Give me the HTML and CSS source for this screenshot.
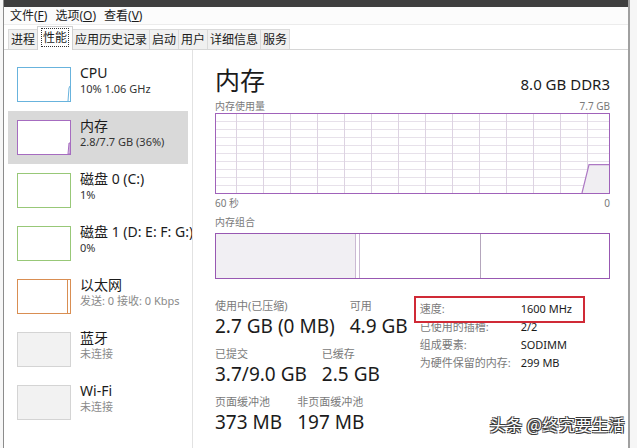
FILE: index.html
```html
<!DOCTYPE html>
<html lang="zh-CN">
<head>
    <meta charset="UTF-8">
    <title>任务管理器 - 性能</title>
    <link rel="stylesheet" href="styles.css">
</head>
<body>
<div class="desk">
    <!-- 뒤에 깔린 다른 창의 가장자리 -->
    <div class="behind"></div>

    <div class="window">
        <div class="titlebar"></div>

        <div class="menubar">
            <span class="menu">文件(<u>F</u>)</span>
            <span class="menu">选项(<u>O</u>)</span>
            <span class="menu">查看(<u>V</u>)</span>
        </div>

        <div class="tabs">
            <span class="tab">进程</span>
            <span class="tab active"><span class="focus">性能</span></span>
            <span class="tab">应用历史记录</span>
            <span class="tab">启动</span>
            <span class="tab">用户</span>
            <span class="tab">详细信息</span>
            <span class="tab">服务</span>
        </div>

        <div class="main">
            <!-- 왼쪽 장치 목록 -->
            <div class="sidebar">
                <div class="item">
                    <div class="thumb cpu">
                        <svg viewBox="0 0 52 33" preserveAspectRatio="none"><polyline points="50,33 51,20 52,18" /></svg>
                    </div>
                    <div class="item-text">
                        <div class="item-name">CPU</div>
                        <div class="item-sub">10% 1.06 GHz</div>
                    </div>
                </div>
                <div class="item selected">
                    <div class="thumb mem">
                        <svg viewBox="0 0 52 33" preserveAspectRatio="none"><polygon points="50,33 51,22 52,22 52,33" /></svg>
                    </div>
                    <div class="item-text">
                        <div class="item-name">内存</div>
                        <div class="item-sub">2.8/7.7 GB (36%)</div>
                    </div>
                </div>
                <div class="item">
                    <div class="thumb disk"></div>
                    <div class="item-text">
                        <div class="item-name">磁盘 0 (C:)</div>
                        <div class="item-sub">1%</div>
                    </div>
                </div>
                <div class="item">
                    <div class="thumb disk"></div>
                    <div class="item-text">
                        <div class="item-name">磁盘 1 (D: E: F: G:)</div>
                        <div class="item-sub">0%</div>
                    </div>
                </div>
                <div class="item">
                    <div class="thumb net"></div>
                    <div class="item-text">
                        <div class="item-name">以太网</div>
                        <div class="item-sub muted">发送: 0 接收: 0 Kbps</div>
                    </div>
                </div>
                <div class="item">
                    <div class="thumb off"></div>
                    <div class="item-text">
                        <div class="item-name">蓝牙</div>
                        <div class="item-sub muted">未连接</div>
                    </div>
                </div>
                <div class="item">
                    <div class="thumb off"></div>
                    <div class="item-text">
                        <div class="item-name">Wi-Fi</div>
                        <div class="item-sub muted">未连接</div>
                    </div>
                </div>
            </div>

            <!-- 오른쪽 메모리 상세 -->
            <div class="detail">
                <div class="head">
                    <span class="title">内存</span>
                    <span class="spec-total">8.0 GB DDR3</span>
                </div>

                <div class="caption"><span>内存使用量</span><span>7.7 GB</span></div>
                <div class="chart">
                    <svg viewBox="0 0 393 78" preserveAspectRatio="none">
                        <polygon class="fill" points="366,78 373,50 393,50 393,78" />
                        <polyline class="line" points="366,78 373,50 393,50" />
                    </svg>
                </div>
                <div class="caption after"><span>60 秒</span><span>0</span></div>

                <div class="caption combo-label"><span>内存组合</span></div>
                <div class="combo">
                    <div class="seg used"></div>
                    <div class="seg modified"></div>
                    <div class="seg standby"></div>
                    <div class="seg free"></div>
                </div>

                <div class="stats">
                    <div class="stat-block">
                        <div class="stat-row">
                            <div class="stat"><div class="stat-label">使用中(已压缩)</div><div class="stat-value">2.7 GB (0 MB)</div></div>
                            <div class="stat"><div class="stat-label">可用</div><div class="stat-value">4.9 GB</div></div>
                        </div>
                        <div class="stat-row">
                            <div class="stat"><div class="stat-label">已提交</div><div class="stat-value">3.7/9.0 GB</div></div>
                            <div class="stat"><div class="stat-label">已缓存</div><div class="stat-value">2.5 GB</div></div>
                        </div>
                        <div class="stat-row">
                            <div class="stat"><div class="stat-label">页面缓冲池</div><div class="stat-value">373 MB</div></div>
                            <div class="stat"><div class="stat-label">非页面缓冲池</div><div class="stat-value">197 MB</div></div>
                        </div>
                    </div>

                    <div class="specs">
                        <div class="spec-row marked"><span class="spec-key">速度:</span><span>1600 MHz</span></div>
                        <div class="spec-row"><span class="spec-key">已使用的插槽:</span><span>2/2</span></div>
                        <div class="spec-row"><span class="spec-key">组成要素:</span><span>SODIMM</span></div>
                        <div class="spec-row"><span class="spec-key">为硬件保留的内存:</span><span>299 MB</span></div>
                    </div>
                </div>
            </div>
        </div>

        <div class="watermark">头条 @终究要生活</div>
    </div>

    <div class="outside"></div>
</div>
</body>
</html>
```

FILE: styles.css
```css
body {
    margin: 0;
    width: 637px;
    height: 448px;
    overflow: hidden;
    font-family: "Noto Sans", "Noto Sans CJK SC", sans-serif;
    color: #1b1b1b;
    background: #f4f4f4;
}
.desk {
    display: flex;
    height: 448px;
}

/* 뒤 창 가장자리 */
.behind {
    width: 3px;
    border-right: 1px solid #8c8c8c;
    background: #f7f7f7;
}

.window {
    position: relative;
    flex: 0 0 624px;
    display: flex;
    flex-direction: column;
    background: #fff;
    border-right: 2px solid #a0a0a0;
}
.outside {
    flex: 1;
    background: #f6f6f6;
}
.titlebar {
    height: 7px;
    background: #3f3f3f;
}

.menubar {
    height: 17px;
    display: flex;
    padding-left: 6px;
    font-size: 12px;
    line-height: 17px;
    background: #fcfcfc;
    border-bottom: 1px solid #ececec;
}
.menu {
    margin-right: 8px;
}
.menu u {
    text-underline-offset: 1px;
}

.tabs {
    height: 24px;
    display: flex;
    align-items: flex-end;
    padding-left: 4px;
    border-bottom: 1px solid #d6d6d6;
    font-size: 12px;
}
.tab {
    height: 19px;
    line-height: 19px;
    padding: 0 2px;
    border: 1px solid #dadada;
    border-bottom: none;
    background: #f0f0f0;
    margin-right: -1px;
}
.tab.active {
    height: 23px;
    line-height: 21px;
    padding: 0 3px;
    background: #fff;
    border-color: #d0d0d0;
    position: relative;
    margin-bottom: -1px;
    z-index: 1;
}
.focus {
    border: 1px dotted #333;
    padding: 0 1px;
}

.main {
    flex: 1;
    display: flex;
    min-height: 0;
}

/* 장치 목록 */
.sidebar {
    width: 180px;
    margin-left: 4px;
    padding: 8px 4px 0 0;
    border-right: 1px solid #e2e2e2;
    overflow: hidden;
}
.item {
    display: flex;
    height: 53px;
    padding-left: 9px;
    box-sizing: border-box;
}
.item.selected {
    background: #d9d9d9;
}
.thumb {
    width: 54px;
    height: 35px;
    box-sizing: border-box;
    margin-top: 9px;
    margin-right: 9px;
    flex: none;
    background: #fff;
    border: 1px solid #ccc;
}
.thumb svg {
    display: block;
    width: 100%;
    height: 100%;
}
.thumb.cpu {
    border-color: #68b3dd;
}
.thumb.cpu polyline {
    fill: none;
    stroke: #68b3dd;
    stroke-width: 1;
}
.thumb.mem {
    border-color: #a66cc0;
}
.thumb.mem polygon {
    fill: #f1edf3;
    stroke: #a66cc0;
    stroke-width: 1;
}
.thumb.disk {
    border-color: #98c878;
}
.thumb.net {
    border-color: #d98e52;
    box-shadow: inset -2px 0 0 #fff, inset -3px 0 0 #d98e52;
}
.thumb.off {
    background: #f2f2f2;
    border-color: #d4d4d4;
}
.item-text {
    margin-top: 6px;
    white-space: nowrap;
}
.item-name {
    font-size: 14px;
    line-height: 18px;
}
.item-sub {
    font-size: 11px;
    line-height: 14px;
    color: #333;
}
.item-sub.muted {
    color: #8a8a8a;
}

/* 메모리 상세 */
.detail {
    flex: 1;
    padding: 14px 18px 0 22px;
}
.head {
    display: flex;
    justify-content: space-between;
    align-items: baseline;
    height: 32px;
}
.title {
    font-size: 25px;
    line-height: 32px;
}
.spec-total {
    font-size: 15px;
}
.caption {
    display: flex;
    justify-content: space-between;
    font-size: 10px;
    line-height: 14px;
    color: #7a7a7a;
    margin-top: 3px;
}
.caption.after {
    margin-top: 2px;
}
.caption.combo-label {
    margin-top: 5px;
}
.chart {
    height: 81px;
    box-sizing: border-box;
    border: 1px solid #a062ba;
    background-color: #fff;
    background-image:
        repeating-linear-gradient(to right, transparent 0 26px, #ddd3e2 26px 27px),
        repeating-linear-gradient(to bottom, transparent 0 7px, #e7e1ea 7px 8px);
    background-position: -6px 0, 0 0;
}
.chart svg {
    display: block;
    width: 100%;
    height: 100%;
}
.chart .fill {
    fill: #f0eef2;
}
.chart .line {
    fill: none;
    stroke: #ad78c4;
    stroke-width: 1.2;
}
.combo {
    display: flex;
    height: 46px;
    margin-top: 4px;
    box-sizing: border-box;
    border: 1px solid #9858b2;
}
.seg.used {
    width: 139px;
    background: #f1eff3;
}
.seg.modified {
    width: 3px;
    border-left: 1px solid #cbb9d3;
    border-right: 1px solid #cbb9d3;
}
.seg.standby {
    width: 120px;
    border-right: 1px solid #b4a6bc;
}
.seg.free {
    flex: 1;
}

.stats {
    display: flex;
    gap: 12px;
    margin-top: 20px;
}
.stat-row {
    display: flex;
    gap: 15px;
    margin-bottom: 8px;
}
.stat-label {
    font-size: 11px;
    line-height: 14px;
    color: #7a7a7a;
}
.stat-value {
    font-size: 19px;
    line-height: 26px;
    white-space: nowrap;
}
.specs {
    font-size: 11px;
    padding-top: 1px;
}
.spec-row {
    display: flex;
    line-height: 18px;
    white-space: nowrap;
}
.spec-key {
    width: 101px;
    color: #7a7a7a;
}
.spec-row.marked {
    position: relative;
}
.spec-row.marked::after {
    content: "";
    position: absolute;
    left: -6px;
    top: -4px;
    width: 167px;
    height: 23px;
    border: 2px solid #d02a36;
}

.watermark {
    position: absolute;
    right: 3px;
    bottom: 12px;
    font-size: 16px;
    font-family: "Noto Sans CJK SC", sans-serif;
    color: #fff;
    letter-spacing: 0.5px;
    text-shadow: 1px 1px 0 #3a3a3a, -1px -1px 0 #3a3a3a, 1px -1px 0 #3a3a3a, -1px 1px 0 #3a3a3a;
}
```
